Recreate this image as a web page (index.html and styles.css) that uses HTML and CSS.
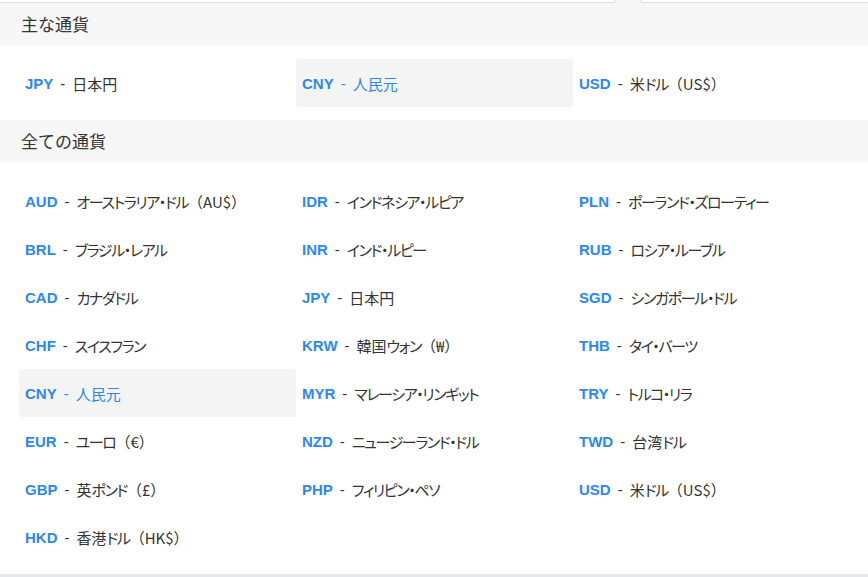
FILE: index.html
```html
<!DOCTYPE html>
<html lang="ja">
<head>
  <meta charset="UTF-8">
  <meta name="viewport" content="width=device-width, initial-scale=1.0">
  <title>通貨選択</title>
  <link rel="stylesheet" href="styles.css">
</head>
<body>
  <div class="currency-popover">
    <span class="arrow"></span>
    <section class="currency-group">
      <h2 class="group-title">主な通貨</h2>
      <div class="currency-list" id="major-list"></div>
    </section>
    <section class="currency-group">
      <h2 class="group-title">全ての通貨</h2>
      <div class="currency-list all" id="all-list"></div>
    </section>
  </div>
  <script>
    // Currency data (all list is laid out row by row, 3 per row)
    const major = [
      ['JPY', '日本円'],
      ['CNY', '人民元'],
      ['USD', '米ドル', 'US$']
    ];

    const all = [
      ['AUD', 'オーストラリア・ドル', 'AU$'], ['IDR', 'インドネシア・ルピア'], ['PLN', 'ポーランド・ズローティー'],
      ['BRL', 'ブラジル・レアル'], ['INR', 'インド・ルピー'], ['RUB', 'ロシア・ルーブル'],
      ['CAD', 'カナダドル'], ['JPY', '日本円'], ['SGD', 'シンガポール・ドル'],
      ['CHF', 'スイスフラン'], ['KRW', '韓国ウォン', '₩'], ['THB', 'タイ・バーツ'],
      ['CNY', '人民元'], ['MYR', 'マレーシア・リンギット'], ['TRY', 'トルコ・リラ'],
      ['EUR', 'ユーロ', '€'], ['NZD', 'ニュージーランド・ドル'], ['TWD', '台湾ドル'],
      ['GBP', '英ポンド', '£'], ['PHP', 'フィリピン・ペソ'], ['USD', '米ドル', 'US$'],
      ['HKD', '香港ドル', 'HK$']
    ];

    const selected = 'CNY';

    // katakana runs get tighter spacing
    function formatName(name) {
      return name.replace(/([\u30A0-\u30FF]+)/g, '<span class="kana">$1</span>');
    }

    function createItem([code, name, symbol]) {
      const cls = code === selected ? 'currency-item active' : 'currency-item';
      const sym = symbol ? `<span class="symbol">（${symbol}）</span>` : '';
      return `<a class="${cls}"><b class="code">${code}</b><span class="sep">-</span><span class="name">${formatName(name)}</span>${sym}</a>`;
    }

    document.getElementById('major-list').innerHTML = major.map(createItem).join('');
    document.getElementById('all-list').innerHTML = all.map(createItem).join('');
  </script>
</body>
</html>
```

FILE: styles.css
```css
* {
  margin: 0;
  padding: 0;
  box-sizing: border-box;
}

body {
  font-family: "Noto Sans CJK JP", "Liberation Sans", sans-serif;
  background-color: #ffffff;
  color: #333333;
  overflow: hidden;
}

/* Popover */
.currency-popover {
  position: relative;
  margin-top: 2px;
  border-top: 1px solid #dddddd;
  border-bottom: 3px solid #e6e9ec;
}

.arrow {
  position: absolute;
  left: 618px;
  top: -11px;
  width: 20px;
  height: 20px;
  background-color: #f7f7f7;
  border-top: 1px solid #dddddd;
  border-left: 1px solid #dddddd;
  transform: rotate(45deg);
}

/* Group */
.group-title {
  position: relative;
  height: 42px;
  line-height: 42px;
  padding-left: 21px;
  font-size: 17px;
  font-weight: normal;
  color: #333333;
  background-color: #f7f7f7;
}

.currency-list {
  display: grid;
  grid-template-columns: repeat(3, 277px);
  padding: 14px 0 13px 19px;
}

.currency-list.all {
  padding-top: 15px;
}

/* Item */
.currency-item {
  display: flex;
  align-items: center;
  height: 48px;
  padding-left: 6px;
  border-radius: 3px;
  font-size: 15px;
  color: #333333;
  white-space: nowrap;
  cursor: pointer;
}

.currency-item .code {
  font-family: "Liberation Sans", Arial, sans-serif;
  font-weight: bold;
  color: #2b88f2;
}

.currency-item .sep {
  font-family: "Liberation Sans", Arial, sans-serif;
  margin: 0 7px;
}

.currency-item .kana {
  font-feature-settings: "palt";
  letter-spacing: -1.4px;
}

.currency-item .symbol {
  margin-right: -7px;
}

.currency-item.active {
  background-color: #f4f4f4;
  color: #2b88f2;
}
```
